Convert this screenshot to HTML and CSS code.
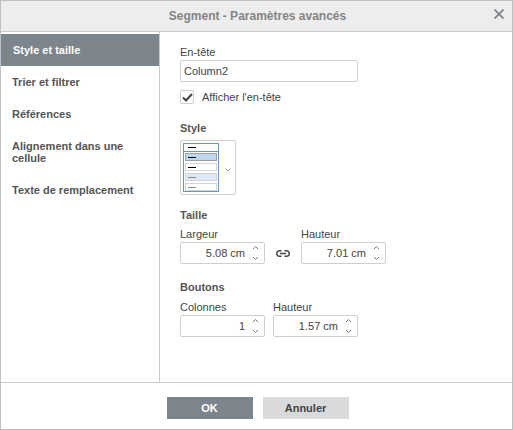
FILE: index.html
```html
<!DOCTYPE html>
<html lang="fr">
<head>
    <meta charset="utf-8">
    <title>Segment - Paramètres avancés</title>
    <link rel="stylesheet" href="styles.css">
</head>
<body>
    <div class="dialog">
        <div class="header">
            <span class="title">Segment - Paramètres avancés</span>
            <svg class="close" width="10" height="10" viewBox="0 0 10 10">
                <path d="M0.5 0.5L9.5 9.5M9.5 0.5L0.5 9.5" stroke="#7d858c" stroke-width="1.8" fill="none"/>
            </svg>
        </div>
        <div class="body">
            <div class="sidebar">
                <div class="tab active">Style et taille</div>
                <div class="tab">Trier et filtrer</div>
                <div class="tab">Références</div>
                <div class="tab">Alignement dans une cellule</div>
                <div class="tab">Texte de remplacement</div>
            </div>
            <div class="content">
                <div class="label">En-tête</div>
                <input class="text-input" type="text" value="Column2">
                <div class="check-row">
                    <span class="checkbox">
                        <svg width="11" height="9" viewBox="0 0 11 9">
                            <path d="M1 4.5L4 7.5L10 1" stroke="#444" stroke-width="2" fill="none"/>
                        </svg>
                    </span>
                    <span>Afficher l'en-tête</span>
                </div>

                <div class="section-title style-title">Style</div>
                <div class="style-box">
                    <div class="style-list">
                        <div class="style-head"><i></i></div>
                        <div class="style-items">
                            <div class="style-item selected"><i></i></div>
                            <div class="style-item"><i></i></div>
                            <div class="style-item light"><i></i></div>
                            <div class="style-item plain"><i></i></div>
                        </div>
                    </div>
                    <svg class="chevron" width="6" height="4" viewBox="0 0 6 4">
                        <path d="M0.5 0.5L3 3L5.5 0.5" stroke="#999" fill="none"/>
                    </svg>
                </div>

                <div class="section-title size-title">Taille</div>
                <div class="field-row">
                    <div class="field">
                        <div class="label">Largeur</div>
                        <div class="spinner">
                            <span class="value">5.08 cm</span>
                            <span class="arrows">
                                <svg width="5" height="3" viewBox="0 0 5 3"><path d="M0 3L2.5 0.5L5 3" stroke="#777" fill="none"/></svg>
                                <svg width="5" height="3" viewBox="0 0 5 3"><path d="M0 0L2.5 2.5L5 0" stroke="#777" fill="none"/></svg>
                            </span>
                        </div>
                    </div>
                    <svg class="link" width="14" height="7" viewBox="0 0 14 7">
                        <path d="M5.5 0.75H3.5A2.75 2.75 0 0 0 3.5 6.25H5.5M8.5 0.75H10.5A2.75 2.75 0 0 1 10.5 6.25H8.5M4 3.5H10" stroke="#444" stroke-width="1.4" fill="none"/>
                    </svg>
                    <div class="field">
                        <div class="label">Hauteur</div>
                        <div class="spinner">
                            <span class="value">7.01 cm</span>
                            <span class="arrows">
                                <svg width="5" height="3" viewBox="0 0 5 3"><path d="M0 3L2.5 0.5L5 3" stroke="#777" fill="none"/></svg>
                                <svg width="5" height="3" viewBox="0 0 5 3"><path d="M0 0L2.5 2.5L5 0" stroke="#777" fill="none"/></svg>
                            </span>
                        </div>
                    </div>
                </div>

                <div class="section-title buttons-title">Boutons</div>
                <div class="field-row tight">
                    <div class="field">
                        <div class="label">Colonnes</div>
                        <div class="spinner">
                            <span class="value">1</span>
                            <span class="arrows">
                                <svg width="5" height="3" viewBox="0 0 5 3"><path d="M0 3L2.5 0.5L5 3" stroke="#777" fill="none"/></svg>
                                <svg width="5" height="3" viewBox="0 0 5 3"><path d="M0 0L2.5 2.5L5 0" stroke="#777" fill="none"/></svg>
                            </span>
                        </div>
                    </div>
                    <div class="field">
                        <div class="label">Hauteur</div>
                        <div class="spinner">
                            <span class="value">1.57 cm</span>
                            <span class="arrows">
                                <svg width="5" height="3" viewBox="0 0 5 3"><path d="M0 3L2.5 0.5L5 3" stroke="#777" fill="none"/></svg>
                                <svg width="5" height="3" viewBox="0 0 5 3"><path d="M0 0L2.5 2.5L5 0" stroke="#777" fill="none"/></svg>
                            </span>
                        </div>
                    </div>
                </div>
            </div>
        </div>
        <div class="footer">
            <button class="btn primary">OK</button>
            <button class="btn">Annuler</button>
        </div>
    </div>
</body>
</html>
```

FILE: styles.css
```css
html, body {
    margin: 0;
    padding: 0;
    width: 100%;
    height: 100%;
    background: #fff;
}
* {
    box-sizing: border-box;
}
.dialog {
    width: 513px;
    height: 430px;
    display: flex;
    flex-direction: column;
    border: 1px solid #c0c0c0;
    font-family: "Liberation Sans", Arial, sans-serif;
    font-size: 11px;
    line-height: 13px;
    color: #444;
    background: #fff;
}
.header {
    position: relative;
    height: 31px;
    flex: none;
    display: flex;
    align-items: center;
    justify-content: center;
    padding-left: 2px;
    background: #ededed;
    border-bottom: 1px solid #cbcbcb;
}
.title {
    font-size: 12px;
    font-weight: bold;
    color: #848484;
}
.close {
    position: absolute;
    right: 8px;
    top: 8px;
}
.body {
    flex: 1;
    display: flex;
    min-height: 0;
}
.sidebar {
    width: 159px;
    flex: none;
    padding-top: 2px;
    border-right: 1px solid #cbcbcb;
}
.tab {
    padding: 10px 11px;
    line-height: 12px;
    font-weight: bold;
    color: #555;
}
.tab.active {
    background: #7d858c;
    color: #fff;
    padding-left: 12px;
}
.content {
    flex: 1;
    padding: 14px 0 0 20px;
}
.label {
    height: 14px;
}
.text-input {
    display: block;
    width: 178px;
    height: 22px;
    padding: 0 3px;
    border: 1px solid #cfcfcf;
    border-radius: 2px;
    font: inherit;
    color: #444;
    outline: none;
}
.check-row {
    display: flex;
    align-items: center;
    gap: 8px;
    margin-top: 8px;
    height: 14px;
}
.checkbox {
    width: 14px;
    height: 14px;
    display: flex;
    align-items: center;
    justify-content: center;
    border: 1px solid #cfcfcf;
    border-radius: 2px;
}
.section-title {
    font-weight: bold;
    height: 14px;
    color: #555;
}
.style-title {
    margin-top: 18px;
}
.style-box {
    width: 56px;
    height: 55px;
    margin-top: 4px;
    padding: 2px 0 0 2px;
    display: flex;
    align-items: flex-start;
    border: 1px solid #cfcfcf;
    border-radius: 2px;
}
.style-list {
    width: 36px;
    height: 49px;
    flex: none;
    border: 1px solid #5b9bd5;
}
.style-head {
    height: 8px;
    padding-left: 4px;
    display: flex;
    align-items: center;
    border-bottom: 1px solid #5b9bd5;
}
.style-head i,
.style-item i {
    display: block;
    width: 8px;
    height: 1px;
    background: #000;
}
.style-items {
    padding: 1px;
}
.style-item {
    height: 8px;
    margin-bottom: 2px;
    padding-left: 2px;
    display: flex;
    align-items: center;
    border: 1px solid #d4d4d4;
}
.style-item.selected {
    background: #bdd7ee;
    border-color: #a0a0a0;
}
.style-item.light {
    background: #deeaf6;
}
.style-item.light i,
.style-item.plain i {
    background: #888;
}
.chevron {
    margin: 25px 0 0 6px;
}
.size-title {
    margin-top: 14px;
}
.field-row {
    display: flex;
    align-items: flex-end;
    margin-top: 5px;
}
.field-row.tight {
    gap: 8px;
    margin-top: 6px;
}
.link {
    margin: 0 11px 7px;
}
.buttons-title {
    margin-top: 17px;
}
.spinner {
    position: relative;
    width: 85px;
    height: 22px;
    display: flex;
    align-items: center;
    justify-content: flex-end;
    padding-right: 19px;
    border: 1px solid #cfcfcf;
    border-radius: 2px;
}
.arrows {
    position: absolute;
    right: 6px;
    top: 3px;
    display: flex;
    flex-direction: column;
    gap: 8px;
}
.arrows svg {
    display: block;
}
.footer {
    height: 47px;
    flex: none;
    display: flex;
    justify-content: center;
    align-items: flex-start;
    gap: 10px;
    padding: 14px 0 0 2px;
    border-top: 1px solid #cbcbcb;
}
.btn {
    width: 86px;
    height: 22px;
    padding: 0;
    border: none;
    font: inherit;
    font-weight: bold;
    color: #444;
    background: #d8dadc;
}
.btn.primary {
    background: #7d858c;
    color: #fff;
}
```
